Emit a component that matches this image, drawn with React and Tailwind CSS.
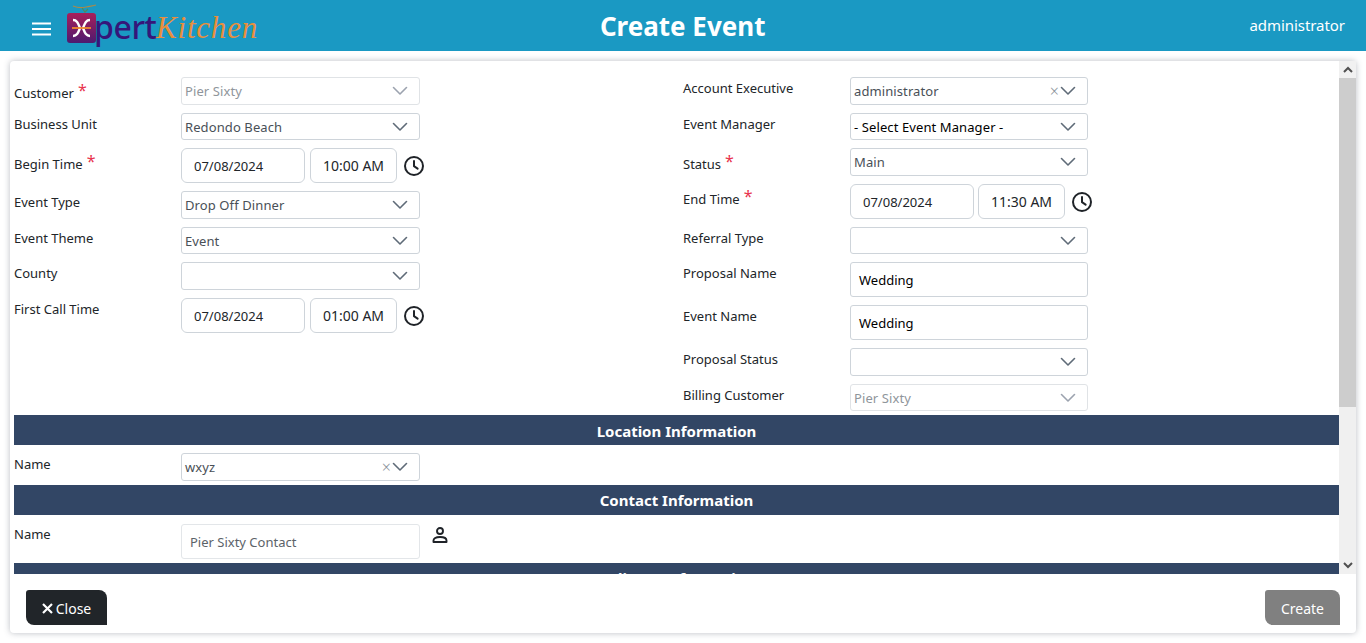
import React from "react";

function Chevron({ muted }) {
  return (
    <svg width="16" height="10" viewBox="0 0 16 10" fill="none" stroke={muted ? "#9ca3af" : "#5f6b78"} strokeWidth="1.6" strokeLinecap="round" strokeLinejoin="round">
      <path d="M1.500 1.500 8 8l6.500-6.500" />
    </svg>
  );
}

function Clock() {
  return (
    <svg width="22" height="22" viewBox="0 0 22 22" fill="none" stroke="#1f2328" strokeWidth="2" strokeLinecap="round" strokeLinejoin="round" className="ml-[6px] shrink-0">
      <circle cx="11" cy="11" r="9" />
      <path d="M11 6v5.200l3.600 2.400" />
    </svg>
  );
}

function Select({ value, h = "h-[28px]", width = "w-[239px]", muted, clear, dark }) {
  return (
    <div className={`${h} ${width} flex items-center rounded-[3px] border border-[#ced4da] bg-white pl-[3px] pr-[11px] text-[13px] ${muted ? "border-[#e0e3e6] text-[#8f959b]" : dark ? "text-black" : "text-[#495057]"}`}>
      <span className="flex-1 whitespace-nowrap pt-[2px] tracking-[0.1px]">{value}</span>
      {clear && <span className="mr-[1px] text-[16px] font-light leading-none text-[#8a9199]">×</span>}
      <Chevron muted={muted} />
    </div>
  );
}

function DateTime({ date, time, gap = "ml-[5px]" }) {
  return (
    <div className="flex h-[35px] items-center">
      <div className="flex h-full w-[124px] items-center rounded-[6px] border border-[#ced4da] bg-white pl-[12px] pt-[2px] text-[13px] text-[#212529]">{date}</div>
      <div className={`${gap} flex h-full w-[87px] items-center justify-center rounded-[6px] border border-[#ced4da] bg-white text-[14px] text-[#212529]`}>{time}</div>
      <Clock />
    </div>
  );
}

function TextBox({ value }) {
  return (
    <div className="flex h-[35px] w-[238px] items-center rounded-[3px] border border-[#ced4da] bg-white pl-[8px] pt-[2px] text-[13px] text-black">{value}</div>
  );
}

function Row({ label, req, children, labelClass = "", gap = "mb-[8px]" }) {
  return (
    <div className={`flex items-start ${gap}`}>
      <div className={`flex w-[167px] shrink-0 text-[13px] leading-[18px] text-[#212529] ${labelClass}`}>
        <span>{label}</span>
        {req && <span className="ml-[4px] -mt-[3px] text-[16px] leading-[18px] text-[#e8344e]">*</span>}
      </div>
      {children}
    </div>
  );
}

function SectionBar({ title, nudge = "" }) {
  return (
    <div className={`flex h-[30px] shrink-0 items-center justify-center bg-[#324665] text-[15px] font-bold text-white ${nudge}`}>
      {title}
    </div>
  );
}

function Logo() {
  return (
    <div className="relative ml-[15px] h-[51px] w-[191px] shrink-0">
      <svg width="26" height="9" viewBox="0 0 26 9" className="absolute left-[5px] top-[4px]" fill="none">
        <path d="M1 2c5 2 9 2 13 1s7-1 10-2" stroke="#a98a4a" strokeWidth="1.200" />
        <path d="M10 4l3 4 3-3" stroke="#4f8a5c" strokeWidth="1.200" />
      </svg>
      <svg width="30" height="33" viewBox="0 0 30 33" className="absolute left-0 top-[12px]">
        <defs>
          <linearGradient id="lg" x1="0" y1="0" x2="0" y2="1">
            <stop offset="0" stopColor="#a81f5a" />
            <stop offset="1" stopColor="#4d1a70" />
          </linearGradient>
        </defs>
        <rect x="0" y="1" width="29" height="30" rx="3" fill="url(#lg)" />
        <path d="M6 8c4 0 5 3 7 8C11 21 10 24 6 24M23 8c-4 0-5 3-7 8 2 5 3 8 7 8" fill="none" stroke="#fff" strokeWidth="2.400" />
        <path d="M5 16h19" stroke="#f08a2c" strokeWidth="1.800" />
      </svg>
      <span className="absolute left-[27px] top-[7px] font-['Noto_Sans',sans-serif] text-[32px] font-medium leading-[40px] tracking-[-0.4px] text-[#35167a]">pert</span>
      <span className="absolute left-[89px] top-[10px] font-['Liberation_Serif',serif] text-[31px] italic leading-[36px] tracking-[0.8px] text-[#e98f3c]">Kitchen</span>
    </div>
  );
}

export default function App() {
  return (
    <div className="relative h-[643px] w-[1366px] overflow-hidden bg-white font-['Noto_Sans','Open_Sans',sans-serif]">
      <header className="flex h-[51px] items-center bg-[#1a99c3] pr-[21px] text-white">
        <svg width="20" height="14" viewBox="0 0 20 14" className="ml-[32px] mt-[6px] shrink-0" stroke="#fff" strokeWidth="2">
          <path d="M0 1.500h19M0 7h19M0 12.500h19" />
        </svg>
        <Logo />
        <div className="flex-1 pr-[142px] text-center text-[26px] font-bold leading-none">Create Event</div>
        <div className="text-[15px] tracking-[-0.05px]">administrator</div>
      </header>

      <main className="mx-[10px] mt-[10px] flex h-[572px] flex-col rounded-[4px] bg-white shadow-[0_0_6px_rgba(60,70,85,0.35)]">
        <div className="flex h-[513px] overflow-hidden">
          <div className="min-w-0 flex-1 overflow-hidden pl-[4px] pt-[16px]">
            <div className="flex">
              <div className="w-[669px] shrink-0">
                <Row label="Customer" req labelClass="pt-[7px]"><Select value="Pier Sixty" muted /></Row>
                <Row label="Business Unit" labelClass="pt-[2px]"><Select value="Redondo Beach" h="h-[27px]" /></Row>
                <Row label="Begin Time" req labelClass="pt-[7px]"><DateTime date="07/08/2024" time="10:00 AM" /></Row>
                <Row label="Event Type" labelClass="pt-[2px]"><Select value="Drop Off Dinner" /></Row>
                <Row label="Event Theme" labelClass="pt-[2px]"><Select value="Event" h="h-[27px]" /></Row>
                <Row label="County" labelClass="pt-[2px]"><Select value="" /></Row>
                <Row label="First Call Time" labelClass="pt-[2px]" gap=""><DateTime date="07/08/2024" time="01:00 AM" /></Row>
              </div>
              <div className="flex-1">
                <Row label="Account Executive" labelClass="pt-[2px]"><Select value="administrator" width="w-[238px]" clear /></Row>
                <Row label="Event Manager" labelClass="pt-[2px]"><Select value="- Select Event Manager -" h="h-[27px]" width="w-[238px]" dark /></Row>
                <Row label="Status" req labelClass="pt-[7px]"><Select value="Main" width="w-[238px]" /></Row>
                <Row label="End Time" req labelClass="pt-[6px]"><DateTime date="07/08/2024" time="11:30 AM" gap="ml-[4px]" /></Row>
                <Row label="Referral Type" labelClass="pt-[2px]"><Select value="" h="h-[27px]" width="w-[238px]" /></Row>
                <Row label="Proposal Name" labelClass="pt-[2px]"><TextBox value="Wedding" /></Row>
                <Row label="Event Name" labelClass="pt-[2px]"><TextBox value="Wedding" /></Row>
                <Row label="Proposal Status" labelClass="pt-[2px]"><Select value="" width="w-[238px]" /></Row>
                <Row label="Billing Customer" labelClass="pt-[2px]" gap=""><Select value="Pier Sixty" h="h-[27px]" width="w-[238px]" muted /></Row>
              </div>
            </div>
            <div className="mt-[4px]"><SectionBar title="Location Information" nudge="pt-[2px]" /></div>
            <div className="flex py-[8px] pb-[4px]">
              <Row label="Name" labelClass="pt-[2px]" gap=""><Select value="wxyz" clear /></Row>
            </div>
            <SectionBar title="Contact Information" />
            <div className="pt-[9px] pb-[4px]">
              <Row label="Name" labelClass="pt-[1px]" gap="">
                <div className="flex h-[35px] w-[239px] items-center rounded-[3px] border border-[#e3e6e9] bg-white pl-[8px] pt-[2px] text-[13px] text-[#5c6369]">Pier Sixty Contact</div>
                <svg width="18" height="18" viewBox="0 0 18 18" fill="none" stroke="#1f2328" strokeWidth="1.900" className="ml-[11px] mt-[2px] shrink-0">
                  <circle cx="9" cy="5" r="3" />
                  <path d="M2.500 16v-1.500c0-2 2-3.500 6.500-3.500s6.500 1.500 6.500 3.500V16z" strokeLinejoin="round" />
                </svg>
              </Row>
            </div>
            <SectionBar title="Delivery Information" />
          </div>
          <div className="flex w-[17px] shrink-0 flex-col bg-[#f0f0f0]">
            <div className="flex h-[17px] items-center justify-center bg-[#f1f1f1]">
              <svg width="10" height="7" viewBox="0 0 10 7" fill="none" stroke="#505050" strokeWidth="2"><path d="M1 6l4-4 4 4" /></svg>
            </div>
            <div className="h-[329px] bg-[#cdcdcd]" />
            <div className="flex-1" />
            <div className="flex h-[17px] items-center justify-center">
              <svg width="10" height="7" viewBox="0 0 10 7" fill="none" stroke="#505050" strokeWidth="2"><path d="M1 1l4 4 4-4" /></svg>
            </div>
          </div>
        </div>
        <div className="flex flex-1 items-start justify-between px-[16px] pt-[16px]">
          <button className="flex h-[35px] w-[81px] items-center justify-center rounded-tl-[3px] rounded-tr-[8px] rounded-bl-[8px] bg-[#212529] pt-[2px] text-[14px] text-white">
            <svg width="11" height="11" viewBox="0 0 11 11" stroke="#fff" strokeWidth="2.200" className="mr-[3px]"><path d="M1 1l9 9M10 1l-9 9" /></svg>
            Close
          </button>
          <button className="flex h-[35px] w-[75px] items-center justify-center rounded-tl-[3px] rounded-tr-[8px] rounded-bl-[8px] bg-[#808080] pt-[2px] text-[14px] text-white">Create</button>
        </div>
      </main>
    </div>
  );
}
